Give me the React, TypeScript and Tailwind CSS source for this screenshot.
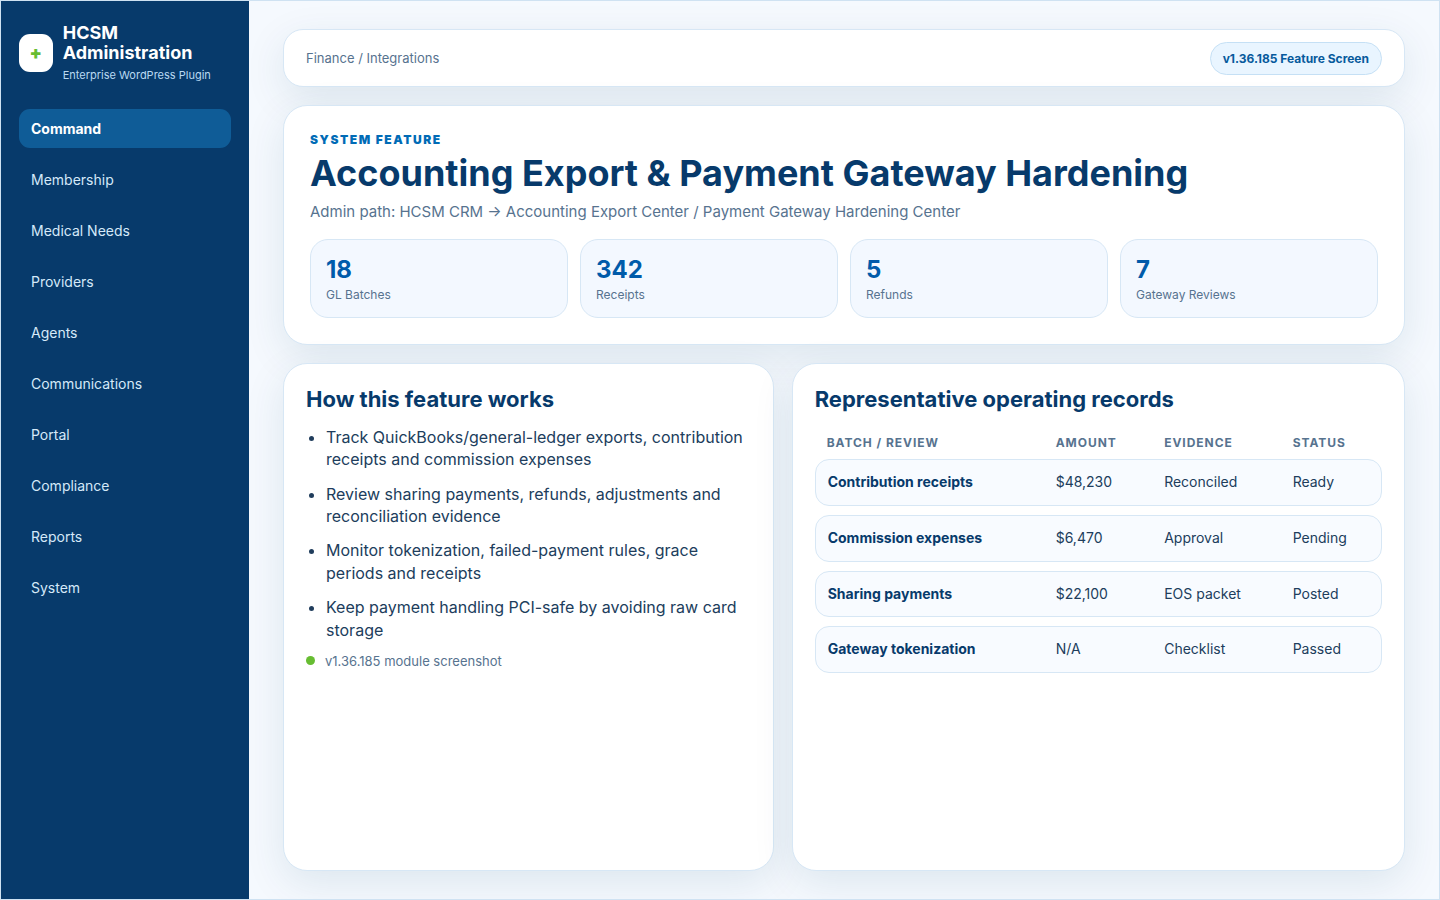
const navItems = [
  "Command",
  "Membership",
  "Medical Needs",
  "Providers",
  "Agents",
  "Communications",
  "Portal",
  "Compliance",
  "Reports",
  "System",
];

const stats = [
  { value: "18", label: "GL Batches" },
  { value: "342", label: "Receipts" },
  { value: "5", label: "Refunds" },
  { value: "7", label: "Gateway Reviews" },
];

const features = [
  "Track QuickBooks/general-ledger exports, contribution receipts and commission expenses",
  "Review sharing payments, refunds, adjustments and reconciliation evidence",
  "Monitor tokenization, failed-payment rules, grace periods and receipts",
  "Keep payment handling PCI-safe by avoiding raw card storage",
];

const columns = ["Batch / Review", "Amount", "Evidence", "Status"];

const records = [
  ["Contribution receipts", "$48,230", "Reconciled", "Ready"],
  ["Commission expenses", "$6,470", "Approval", "Pending"],
  ["Sharing payments", "$22,100", "EOS packet", "Posted"],
  ["Gateway tokenization", "N/A", "Checklist", "Passed"],
];

const card = "bg-white border border-[#d7e7f5] shadow-[0_12px_40px_rgba(7,66,100,0.1)]";

function Sidebar() {
  return (
    <aside className="w-[248px] shrink-0 bg-[#073a6b] px-[18px] pt-[22px] text-white">
      <div className="mb-[26px] flex items-center gap-2.5">
        <div className="flex h-[38px] w-[33.7px] shrink-0 items-center justify-center rounded-[11px] bg-white text-lg font-black text-[#67bd32]">
          +
        </div>
        <div>
          <div className="text-lg leading-[19.8px] font-bold">HCSM Administration</div>
          <div className="mt-[5px] pb-px text-[11px] leading-[14px] text-[#b9d9f2]">Enterprise WordPress Plugin</div>
        </div>
      </div>
      <nav className="flex flex-col gap-3">
        {navItems.map((item, i) => (
          <a
            key={item}
            className={`rounded-[11px] px-3 py-[11px] text-sm leading-[17px] ${
              i === 0 ? "bg-[#0f5c97] font-bold text-white" : "text-[#d5e9f9]"
            }`}
          >
            {item}
          </a>
        ))}
      </nav>
    </aside>
  );
}

function Hero() {
  return (
    <section className={`h-[240px] rounded-3xl p-[26px] ${card}`}>
      <div className="text-xs leading-[15px] font-black tracking-[1.56px] text-[#006bb6] uppercase">System Feature</div>
      <h1 className="mt-[5px] text-[36px] leading-[42px] font-bold text-[#073a6b]">
        Accounting Export &amp; Payment Gateway Hardening
      </h1>
      <p className="mt-[9px] text-[15px] leading-[18px] text-[#57738f]">
        Admin path: HCSM CRM → Accounting Export Center / Payment Gateway Hardening Center
      </p>
      <div className="mt-[18px] grid grid-cols-4 gap-3">
        {stats.map((stat) => (
          <div key={stat.label} className="h-[79px] rounded-[18px] border border-[#d7e7f5] bg-[#f3f8ff] px-[15px] pt-[15px]">
            <div className="text-2xl leading-[29px] font-bold text-[#005baa]">{stat.value}</div>
            <div className="mt-[3px] text-xs leading-[15px] text-[#57738f]">{stat.label}</div>
          </div>
        ))}
      </div>
    </section>
  );
}

function FeaturePanel() {
  return (
    <section className={`rounded-3xl p-[22px] ${card}`}>
      <h2 className="text-[22px] leading-[27px] font-bold text-[#073a6b]">How this feature works</h2>
      <ul className="mt-[12.7px] list-disc pl-5 text-base leading-[22.4px] text-[#203d5c]">
        {features.map((feature) => (
          <li key={feature} className="mb-3 last:mb-0">
            {feature}
          </li>
        ))}
      </ul>
      <div className="mt-[11.9px] flex items-center gap-2.5 text-[13px] leading-4 text-[#57738f]">
        <span className="size-[9px] rounded-full bg-[#67bd32]" />
        v1.36.185 module screenshot
      </div>
    </section>
  );
}

function RecordsPanel() {
  return (
    <section className={`rounded-3xl p-[22px] ${card}`}>
      <h2 className="text-[22px] leading-[27px] font-bold text-[#073a6b]">Representative operating records</h2>
      <div className="mt-[22px] grid grid-cols-[229px_108.5px_128.5px_1fr] pl-3 text-xs leading-[15px] font-bold tracking-[0.96px] text-[#57738f] uppercase">
        {columns.map((column) => (
          <div key={column}>{column}</div>
        ))}
      </div>
      <div className="mt-[9.4px] flex flex-col gap-[9px]">
        {records.map((row) => (
          <div
            key={row[0]}
            className="grid h-[46.6px] grid-cols-[228px_108.5px_128.5px_1fr] items-center rounded-[14px] border border-[#d7e7f5] bg-[#f8fbff] pb-[1.4px] pl-3 text-sm leading-[17px] text-[#203d5c]"
          >
            {row.map((cell, i) => (
              <div key={cell} className={i === 0 ? "font-bold text-[#073a6b]" : ""}>
                {cell}
              </div>
            ))}
          </div>
        ))}
      </div>
    </section>
  );
}

export default function App() {
  return (
    <div className="flex h-[900px] w-[1440px] overflow-hidden border border-[#cfe2f2] bg-[#f5f9fe] font-['Inter','Liberation_Sans',sans-serif]">
      <Sidebar />
      <main className="flex flex-1 flex-col gap-[18px] px-[34px] py-7">
        <header className={`flex h-[58px] shrink-0 items-center justify-between rounded-[20px] px-[22px] ${card}`}>
          <span className="text-[13px] leading-4 text-[#57738f]">Finance / Integrations</span>
          <span className="rounded-full border border-[#c5e0f5] bg-[#e9f5ff] px-3 py-2 text-xs leading-[15px] font-bold text-[#075a9c]">
            v1.36.185 Feature Screen
          </span>
        </header>
        <Hero />
        <div className="grid min-h-0 flex-1 grid-cols-[0.8fr_1fr] gap-[18px]">
          <FeaturePanel />
          <RecordsPanel />
        </div>
      </main>
    </div>
  );
}
